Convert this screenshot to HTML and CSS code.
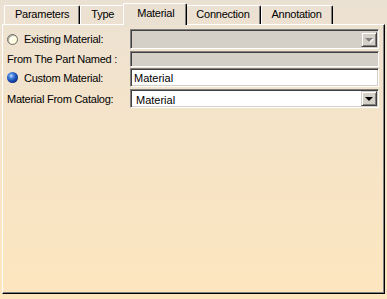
FILE: index.html
```html
<!DOCTYPE html>
<html lang="en">
<head>
  <meta charset="UTF-8" />
  <title>Material</title>
  <link rel="stylesheet" href="styles.css">
</head>
<body>

<!-- tab strip -->
<div class="tabs">
    <div class="tab">Parameters</div>
    <div class="tab">Type</div>
    <div class="tab active">Material</div>
    <div class="tab">Connection</div>
    <div class="tab">Annotation</div>
</div>

<div class="panel">
    <div class="row row-combo">
        <label class="label"><span class="radio"></span>Existing Material:</label>
        <div class="field disabled combo">
            <span class="value"></span>
            <span class="drop-btn"><span class="arrow"></span></span>
        </div>
    </div>
    <div class="row row-part">
        <label class="label plain">From The Part Named :</label>
        <div class="field disabled"></div>
    </div>
    <div class="row row-custom">
        <label class="label"><span class="radio checked"></span>Custom Material:</label>
        <div class="field"><span class="value">Material</span></div>
    </div>
    <div class="row row-catalog">
        <label class="label plain">Material From Catalog:</label>
        <div class="field combo">
            <span class="value">Material</span>
            <span class="drop-btn"><span class="arrow"></span></span>
        </div>
    </div>
</div>

</body>
</html>
```

FILE: styles.css
```css
/* page */
body {
    margin: 0;
    height: 299px;
    background: linear-gradient(180deg, #ebe1d3 0%, #f6e4c8 45%, #fde6bf 100%);
    font-family: "Liberation Sans", Arial, sans-serif;
    font-size: 11px;
    letter-spacing: -0.25px;
    color: #000;
}

/* tabs */
.tabs {
    display: flex;
    align-items: flex-end;
    height: 24px;
    padding-left: 4px;
    box-sizing: border-box;
}
.tab {
    height: 19px;
    box-sizing: border-box;
    padding: 0 10px;
    line-height: 17px;
    border: 1px solid;
    border-color: #fff #000 transparent #fff;
    border-bottom: none;
    border-radius: 2px 2px 0 0;
    box-shadow: inset -1px 0 #808080;
}
.tab.active {
    position: relative;
    z-index: 1;
    height: 22px;
    margin: 0 -2px -1px;
    padding: 0 12px 0 13px;
    line-height: 19px;
    background: #ebe1d3;
}

/* panel */
.panel {
    height: 270px;
    margin: 0 2px 0 2px;
    box-sizing: border-box;
    padding: 4px 5px 0 4px;
    border: 1px solid;
    border-color: #fff #000 #000 #fff;
    box-shadow: inset -1px -1px #808080;
    display: flex;
    flex-direction: column;
}

.row {
    display: flex;
    align-items: center;
}
.row-combo { height: 20px; }
.row-part { height: 16px; margin-top: 2px; }
.row-custom { height: 19px; margin-top: 1px; }
.row-catalog { height: 19px; margin-top: 2px; }

.label {
    width: 123px;
    display: flex;
    align-items: center;
    gap: 6px;
    white-space: nowrap;
}

/* radio buttons */
.radio {
    width: 11px;
    height: 11px;
    box-sizing: border-box;
    border-radius: 50%;
    border: 1px solid #6f6f6f;
    background: radial-gradient(circle at 40% 40%, #ffffff 0%, #fffbd8 60%, #f1ecc2 100%);
    box-shadow: inset 1px 1px #b0ab98;
}
.radio.checked {
    border: none;
    background: radial-gradient(circle at 38% 35%, #cfe4ff 0%, #4f8be0 22%, #1c4db6 50%, #0b2468 85%, #061a4a 100%);
    box-shadow: none;
}

/* text fields */
.field {
    flex: 1;
    height: 100%;
    box-sizing: border-box;
    display: flex;
    align-items: center;
    padding-left: 3px;
    background: #fff;
    border: 1px solid;
    border-color: #808080 #fff #fff #808080;
    box-shadow: inset 1px 1px #404040, inset -1px -1px #d4d0c8;
}
.field.disabled {
    background: #d4d0c8;
}
.field .value {
    flex: 1;
    letter-spacing: 0;
}
.row-catalog .value {
    padding-left: 2px;
    margin-top: 2px;
}

/* combo button */
.combo {
    padding-right: 1px;
}
.drop-btn {
    width: 16px;
    height: 15px;
    box-sizing: border-box;
    display: flex;
    align-items: center;
    justify-content: center;
    background: #d4d0c8;
    border: 1px solid;
    border-color: #d4d0c8 #404040 #404040 #d4d0c8;
    box-shadow: inset 1px 1px #fff, inset -1px -1px #808080;
}
.arrow {
    width: 0;
    height: 0;
    border-left: 4px solid transparent;
    border-right: 4px solid transparent;
    border-top: 4px solid #000;
    margin-top: 1px;
}
.disabled .arrow {
    border-top-color: #808080;
    filter: drop-shadow(1px 1px 0 #fff);
}
```
